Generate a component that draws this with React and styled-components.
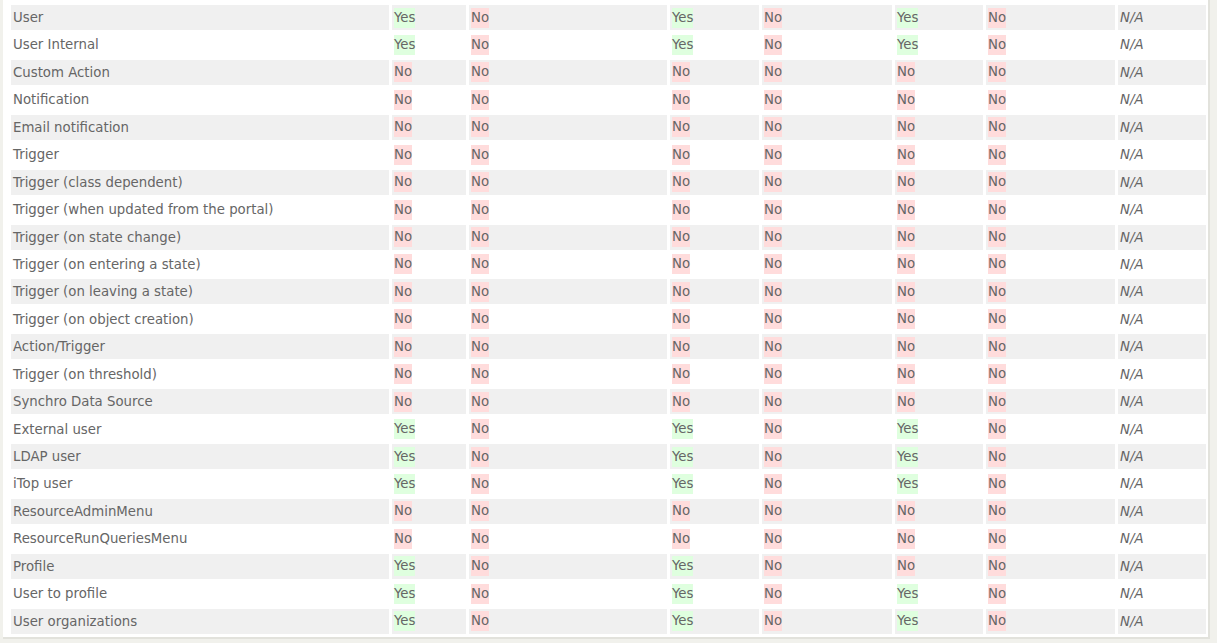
import React from "react";
import styled, { createGlobalStyle } from "styled-components";

const GlobalStyle = createGlobalStyle`
  html, body {
    margin: 0;
    padding: 0;
    background: #f1f1ec;
  }
`;

const Page = styled.div`
  height: 643px;
  box-sizing: border-box;
  padding: 0 7px 4px 3px;
  background: #f1f1ec;
  overflow: hidden;
`;

const Panel = styled.div`
  background: #fff;
  border-right: 2px solid #e2e2dc;
  border-bottom: 2px solid #e2e2dc;
  padding: 5px 2px 3px 8px;
`;

const Grid = styled.div`
  display: grid;
  grid-template-columns: 378px 74px 198px 89px 130px 88px 129px 88px;
  grid-auto-rows: 25px;
  column-gap: 3px;
  row-gap: 2.45px;
  font-family: "DejaVu Sans", Tahoma, sans-serif;
  font-size: 13.3px;
  color: #666;
`;

const Row = styled.div`
  display: contents;
`;

const Cell = styled.div`
  display: flex;
  align-items: center;
  padding: 0 2px;
  white-space: nowrap;
  overflow: hidden;
  background: ${(p) => (p.$odd ? "#f0f0f0" : "#fff")};
  font-style: ${(p) => (p.$italic ? "italic" : "normal")};
`;

const Flag = styled.span`
  display: inline-block;
  line-height: 20px;
  height: 20px;
  background: ${(p) => (p.$yes ? "#dfffdf" : "#ffdcdc")};
`;

const Y = "Y";
const N = "N";

const rows = [
  ["User", [Y, N, Y, N, Y, N]],
  ["User Internal", [Y, N, Y, N, Y, N]],
  ["Custom Action", [N, N, N, N, N, N]],
  ["Notification", [N, N, N, N, N, N]],
  ["Email notification", [N, N, N, N, N, N]],
  ["Trigger", [N, N, N, N, N, N]],
  ["Trigger (class dependent)", [N, N, N, N, N, N]],
  ["Trigger (when updated from the portal)", [N, N, N, N, N, N]],
  ["Trigger (on state change)", [N, N, N, N, N, N]],
  ["Trigger (on entering a state)", [N, N, N, N, N, N]],
  ["Trigger (on leaving a state)", [N, N, N, N, N, N]],
  ["Trigger (on object creation)", [N, N, N, N, N, N]],
  ["Action/Trigger", [N, N, N, N, N, N]],
  ["Trigger (on threshold)", [N, N, N, N, N, N]],
  ["Synchro Data Source", [N, N, N, N, N, N]],
  ["External user", [Y, N, Y, N, Y, N]],
  ["LDAP user", [Y, N, Y, N, Y, N]],
  ["iTop user", [Y, N, Y, N, Y, N]],
  ["ResourceAdminMenu", [N, N, N, N, N, N]],
  ["ResourceRunQueriesMenu", [N, N, N, N, N, N]],
  ["Profile", [Y, N, Y, N, N, N]],
  ["User to profile", [Y, N, Y, N, Y, N]],
  ["User organizations", [Y, N, Y, N, Y, N]],
];

export default function App() {
  return (
    <Page>
      <GlobalStyle />
      <Panel>
        <Grid>
          {rows.map(([label, flags], i) => {
            const odd = i % 2 === 0;
            return (
              <Row key={label}>
                <Cell $odd={odd}>{label}</Cell>
                {flags.map((f, j) => (
                  <Cell key={j} $odd={odd}>
                    <Flag $yes={f === Y}>{f === Y ? "Yes" : "No"}</Flag>
                  </Cell>
                ))}
                <Cell $odd={odd} $italic>N/A</Cell>
              </Row>
            );
          })}
        </Grid>
      </Panel>
    </Page>
  );
}
